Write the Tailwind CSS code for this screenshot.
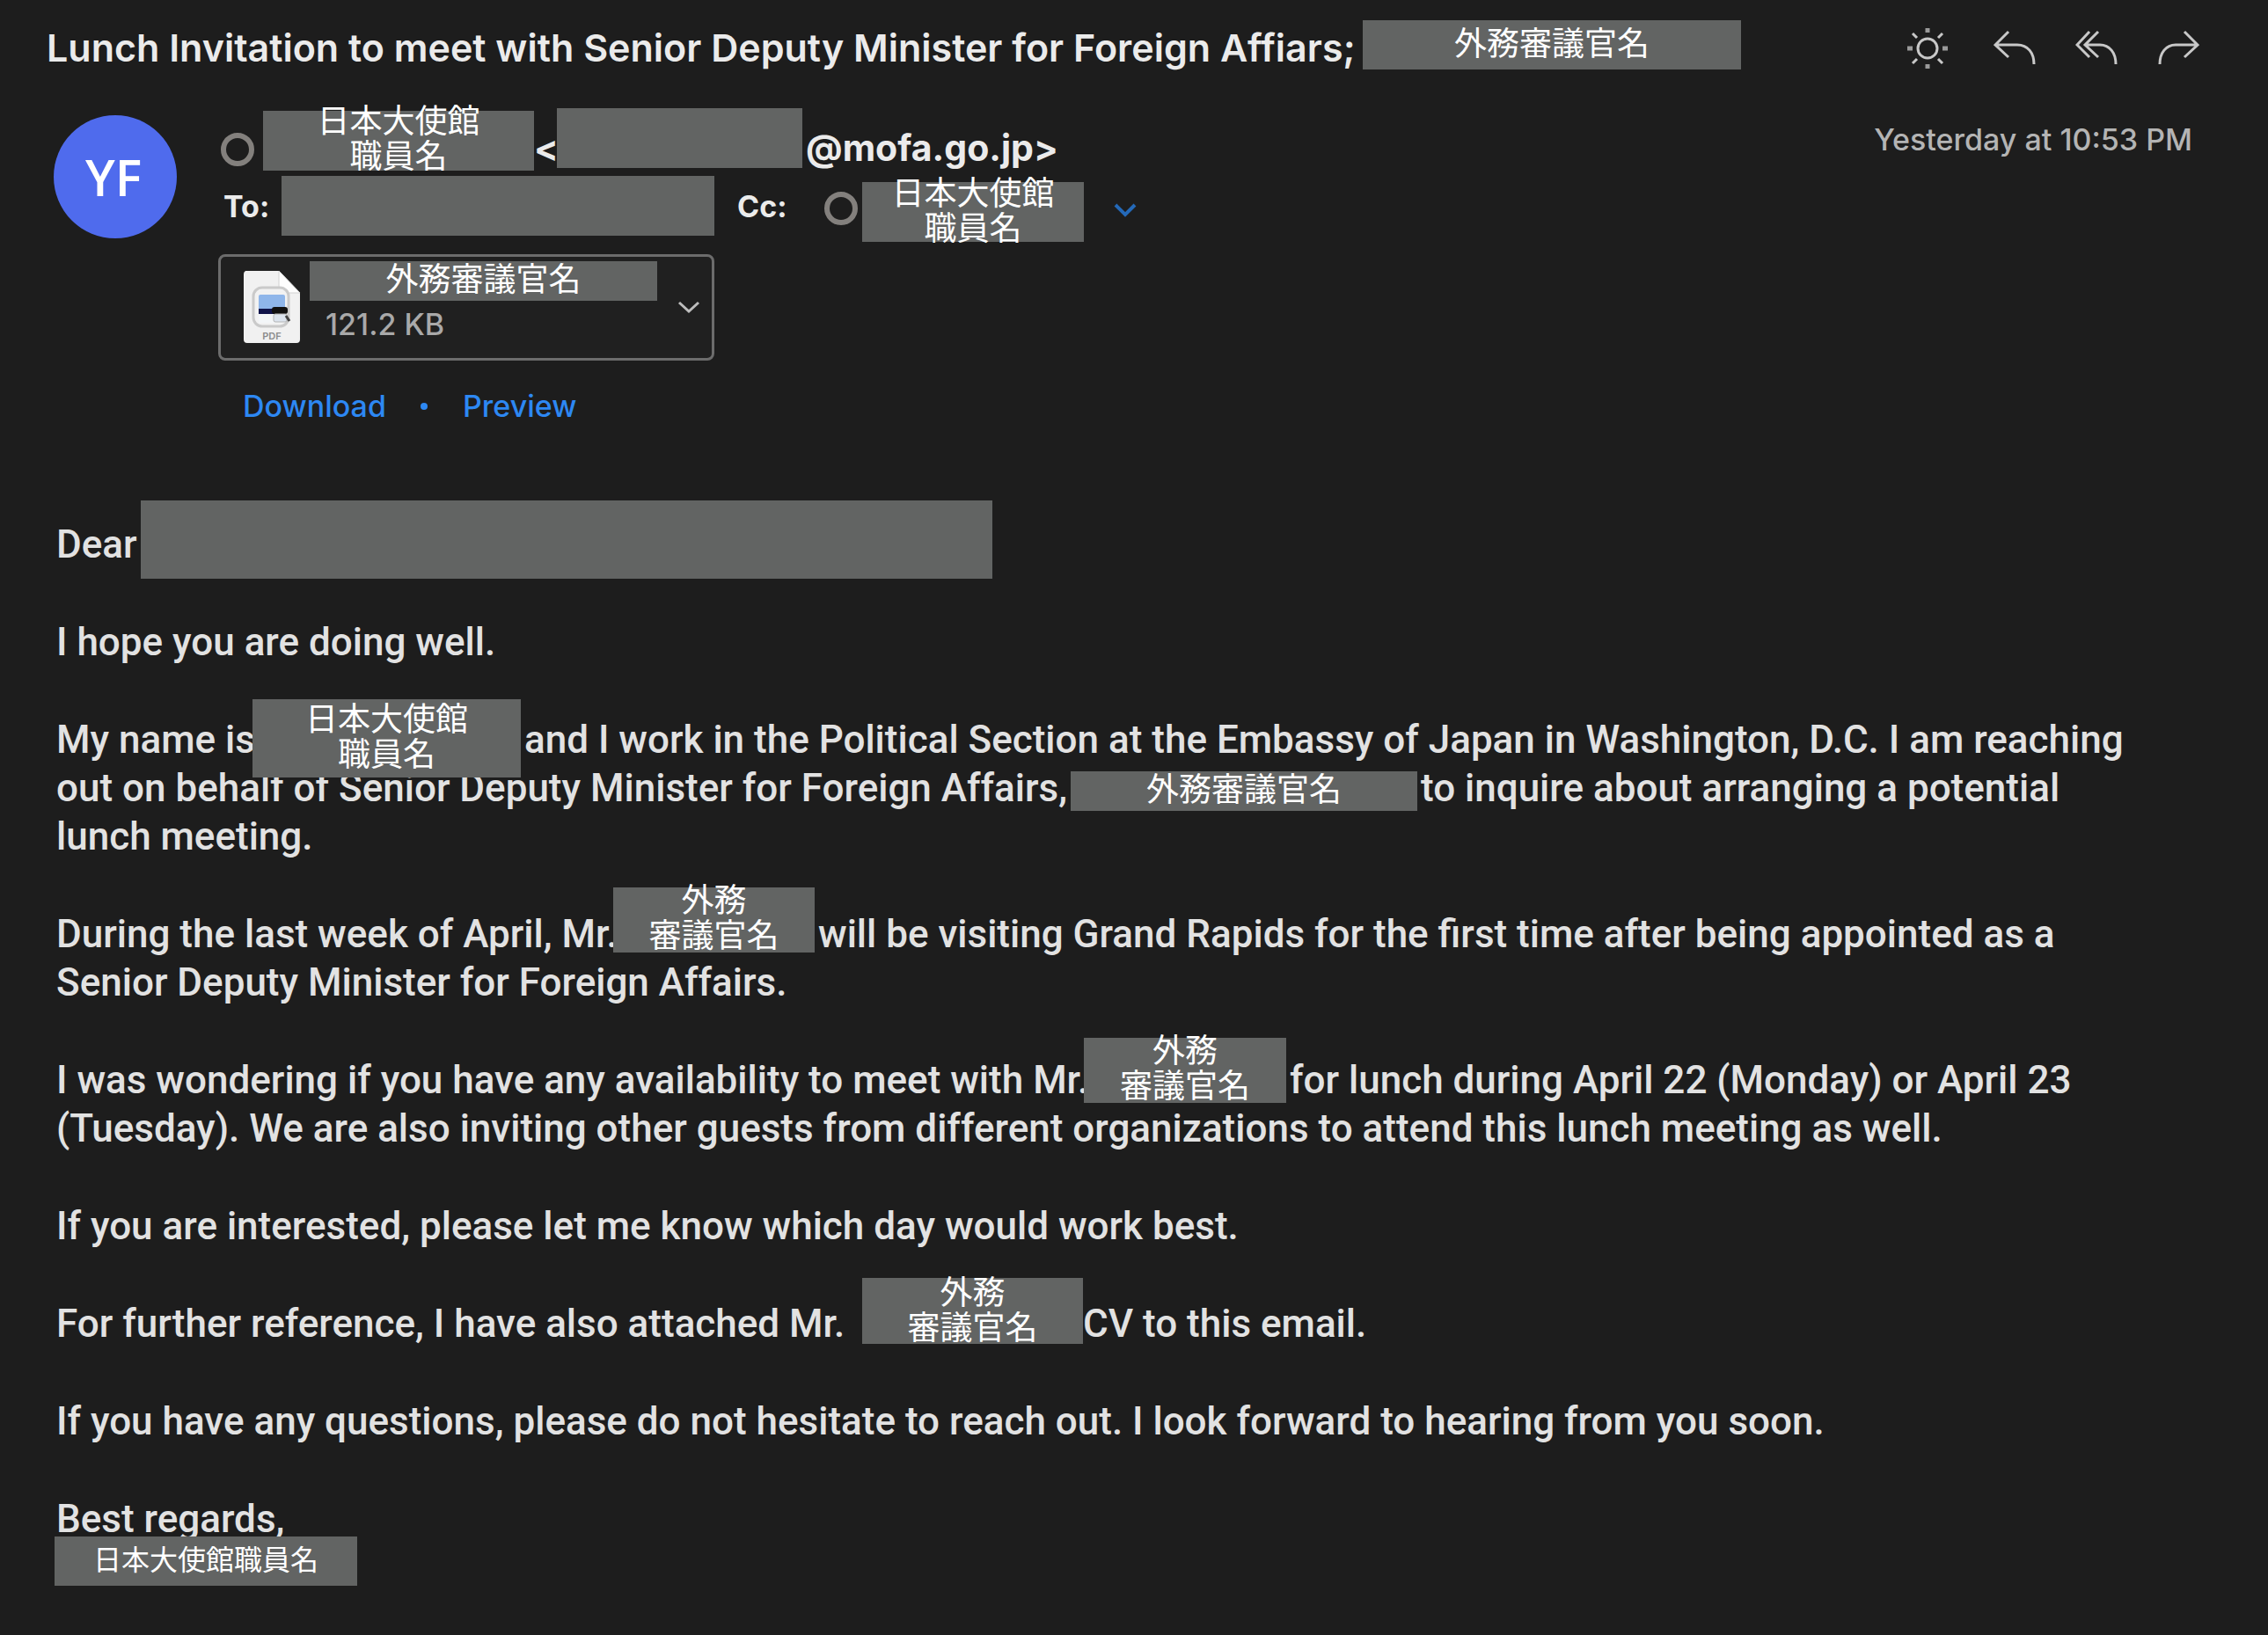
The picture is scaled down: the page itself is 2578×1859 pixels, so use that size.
<!DOCTYPE html>
<html lang="en">
<head>
<meta charset="utf-8">
<meta name="viewport" content="width=device-width, initial-scale=1">
<title>Lunch Invitation</title>
<script src="https://cdn.jsdelivr.net/npm/@tailwindcss/browser@4"></script>
</head>
<body class="min-h-screen bg-[#1d1d1d] font-['Inter','Noto_Sans_CJK_JP',sans-serif] text-[#ebebeb]">
<main class="pt-[23px] pb-14">

  <!-- Subject and message actions -->
  <header class="flex h-[62px] items-center pr-[78px] pl-[53px]">
    <h1 class="w-[1496px] shrink-0 text-[43px] leading-[62px] font-semibold whitespace-nowrap">Lunch Invitation to meet with Senior Deputy Minister for Foreign Affiars;</h1>
    <span class="flex h-14 w-[430px] shrink-0 items-center justify-center self-start bg-[#626463] pb-2 font-['Noto_Sans_CJK_JP',sans-serif] text-[37px] leading-10 text-white" lang="ja">外務審議官名</span>
    <div class="ml-auto flex items-center gap-[45px] text-[#c8c8c8]">
      <button type="button" aria-label="Switch background" class="mr-1.5 size-12">
        <svg viewBox="0 0 48 48" class="size-12" fill="none" stroke="currentColor" stroke-width="3"><circle cx="24" cy="25" r="11"/><path d="M7 8l5 5M41 8l-5 5M7 42l5-5M41 42l-5-5"/><path stroke="#9a9a9a" stroke-width="5" d="M24 2v5M24 43v5M1 25h6M41 25h6"/></svg>
      </button>
      <button type="button" aria-label="Reply" class="size-12">
        <svg viewBox="0 0 48 48" class="size-12" fill="none" stroke="currentColor" stroke-width="3"><path d="M17 6L2 21l15 14M2 21h25c12 0 19 9 19 22"/></svg>
      </button>
      <button type="button" aria-label="Reply all" class="size-12">
        <svg viewBox="0 0 48 48" class="size-12" fill="none" stroke="currentColor" stroke-width="3"><path d="M16 6L2 21l14 14M26 6L11 21l15 14M11 21h17c11 0 18 9 18 22"/></svg>
      </button>
      <button type="button" aria-label="Forward" class="size-12">
        <svg viewBox="0 0 48 48" class="size-12" fill="none" stroke="currentColor" stroke-width="3"><path d="M31 6l15 15-15 14M46 21H21C10 21 3 30 3 43"/></svg>
      </button>
    </div>
  </header>

  <!-- Sender, recipients and attachment -->
  <section class="mt-[38px] flex items-start pr-[86px] pl-[61px]">
    <div class="mt-2 flex size-[140px] shrink-0 items-center justify-center rounded-full bg-[#4f6bed] pt-0.5 pr-1 font-['Open_Sans',sans-serif] text-[57px] font-semibold text-white">YF</div>

    <div class="ml-[47px]">
      <div class="flex h-[71px] items-start pl-[3px] text-[41px] leading-[50px] font-bold">
        <span class="mt-7 size-[38px] shrink-0 rounded-full border-[6px] border-[#83807d]"></span>
        <span class="mt-[3px] ml-2.5 flex h-[68px] w-[308px] shrink-0 items-center justify-center bg-[#626463] pb-2.5 text-center font-['Noto_Sans_CJK_JP',sans-serif] text-[37px] leading-10 font-normal text-white" lang="ja">日本大使館<br>職員名</span>
        <span class="mt-5 w-[26px] shrink-0">&lt;</span>
        <span class="relative h-[68px] w-[279px] shrink-0 bg-[#626463]"></span>
        <span class="mt-5 ml-1">@mofa.go.jp&gt;</span>
      </div>

      <div class="mt-1.5 flex h-[75px] items-start pl-1.5 text-[34px] leading-10 font-bold">
        <span class="mt-[15px] w-[66px] shrink-0">To:</span>
        <span class="h-[68px] w-[492px] shrink-0 bg-[#626463]"></span>
        <span class="mt-[15px] ml-[26px] w-[99px] shrink-0">Cc:</span>
        <span class="mt-[18px] size-[38px] shrink-0 rounded-full border-[6px] border-[#83807d]"></span>
        <span class="mt-[7px] ml-[5px] flex h-[68px] w-[252px] shrink-0 items-center justify-center bg-[#626463] pb-2 text-center font-['Noto_Sans_CJK_JP',sans-serif] text-[37px] leading-10 font-normal text-white" lang="ja">日本大使館<br>職員名</span>
        <button type="button" aria-label="Show all recipients" class="mt-7 ml-8 text-[#2469b8]">
          <svg viewBox="0 0 30 24" class="h-6 w-[30px]" fill="none" stroke="currentColor" stroke-width="4"><path d="M4 5l11 11L26 5"/></svg>
        </button>
      </div>

      <div class="mt-3.5 flex h-[121px] w-[564px] items-start rounded-lg border-[3px] border-[#6c6c6c] bg-[#202020] pl-[25px]">
        <svg viewBox="0 0 66 84" class="mt-[15px] h-[84px] w-[66px] shrink-0" aria-hidden="true">
          <path d="M3 1h38l24 25v53a4 4 0 0 1-4 4H5a4 4 0 0 1-4-4V5a4 4 0 0 1 2-4z" fill="#f1f1f1"/>
          <path d="M41 1l24 25H45a4 4 0 0 1-4-4z" fill="#fdfdfd" stroke="#d2d2d2"/>
          <rect x="12" y="20" width="40" height="44" rx="10" fill="#f2f2f2" stroke="#cacaca" stroke-width="3"/>
          <rect x="18" y="28" width="30" height="18" rx="2" fill="#8fb6ea"/>
          <rect x="18" y="44" width="30" height="6" fill="#10144a"/>
          <rect x="18" y="50" width="30" height="10" fill="#f3f6f8"/>
          <rect x="33" y="42" width="18" height="8" rx="3" fill="#111"/>
          <rect x="35" y="50" width="15" height="9" rx="2" fill="#dce4ee" stroke="#b4b4b4"/>
          <path d="M49 52l4 6" stroke="#444" stroke-width="3"/>
          <text x="33" y="79" text-anchor="middle" font-family="Inter, sans-serif" font-size="11" font-weight="600" fill="#8c8c8c">PDF</text>
        </svg>
        <div class="ml-[10px] flex w-[395px] shrink-0 flex-col">
          <span class="mt-[5px] flex h-[45px] items-center justify-center bg-[#626463] pb-2.5 font-['Noto_Sans_CJK_JP',sans-serif] text-[37px] leading-10 text-white" lang="ja">外務審議官名</span>
          <span class="mt-[7px] pl-[18px] text-[34px] leading-10 font-medium text-[#a9a9a9]">121.2 KB</span>
        </div>
        <button type="button" aria-label="Attachment options" class="mt-[45px] ml-[21px] text-[#bdbdbd]">
          <svg viewBox="0 0 30 24" class="h-6 w-[30px]" fill="none" stroke="currentColor" stroke-width="3"><path d="M4 7l11 10L26 7"/></svg>
        </button>
      </div>

      <div class="mt-8 flex items-center pl-7 text-[34px] leading-10 font-medium text-[#2d88f3]">
        <a href="#download" class="w-[164px]">Download</a>
        <span class="mr-10 ml-[38px] size-2 rounded-full bg-[#2d88f3]"></span>
        <a href="#preview">Preview</a>
      </div>
    </div>

    <time class="mt-4 ml-auto text-[34px] leading-10 font-medium whitespace-nowrap text-[#b4b4b4]">Yesterday at 10:53 PM</time>
  </section>

  <!-- Message text -->
  <article class="mt-[110px] flex flex-col gap-14 pr-10 pl-16 font-['Roboto',sans-serif] text-[44px] leading-[55px] font-medium whitespace-nowrap text-[#e2e2e2]">
    <div class="flex h-[55px] items-start">
      <span class="w-24 shrink-0">Dear</span>
      <span class="relative -mt-[23px] h-[89px] w-[968px] shrink-0 bg-[#626463]"></span>
    </div>

    <p>I hope you are doing well.</p>

    <div>
      <div class="flex h-[55px] items-start">
        <span class="w-[223px] shrink-0">My name is</span>
        <span class="relative z-10 -mt-[19px] flex h-[89px] w-[305px] shrink-0 items-center justify-center bg-[#626463] pb-2.5 text-center font-['Noto_Sans_CJK_JP',sans-serif] text-[37px] leading-10 font-normal text-white" lang="ja">日本大使館<br>職員名</span>
        <span class="ml-1">and I work in the Political Section at the Embassy of Japan in Washington, D.C. I am reaching</span>
      </div>
      <div class="flex h-[55px] items-start">
        <span class="w-[1153px] shrink-0">out on behalf of Senior Deputy Minister for Foreign Affairs,</span>
        <span class="relative mt-2 flex h-[45px] w-[394px] shrink-0 items-center justify-center bg-[#626463] pb-2.5 font-['Noto_Sans_CJK_JP',sans-serif] text-[37px] leading-10 font-normal text-white" lang="ja">外務審議官名</span>
        <span class="ml-1">to inquire about arranging a potential</span>
      </div>
      <p>lunch meeting.</p>
    </div>

    <div>
      <div class="flex h-[55px] items-start">
        <span class="w-[633px] shrink-0">During the last week of April, Mr.</span>
        <span class="relative -mt-[26px] flex h-[74px] w-[229px] shrink-0 items-center justify-center bg-[#626463] pb-2.5 text-center font-['Noto_Sans_CJK_JP',sans-serif] text-[37px] leading-10 font-normal text-white" lang="ja">外務<br>審議官名</span>
        <span class="ml-1">will be visiting Grand Rapids for the first time after being appointed as a</span>
      </div>
      <p>Senior Deputy Minister for Foreign Affairs.</p>
    </div>

    <div>
      <div class="flex h-[55px] items-start">
        <span class="w-[1168px] shrink-0">I was wondering if you have any availability to meet with Mr.</span>
        <span class="relative -mt-[21px] flex h-[74px] w-[230px] shrink-0 items-center justify-center bg-[#626463] pb-2.5 text-center font-['Noto_Sans_CJK_JP',sans-serif] text-[37px] leading-10 font-normal text-white" lang="ja">外務<br>審議官名</span>
        <span class="ml-1">for lunch during April 22 (Monday) or April 23</span>
      </div>
      <p>(Tuesday). We are also inviting other guests from different organizations to attend this lunch meeting as well.</p>
    </div>

    <p>If you are interested, please let me know which day would work best.</p>

    <div class="flex h-[55px] items-start">
      <span class="w-[916px] shrink-0">For further reference, I have also attached Mr.</span>
      <span class="relative -mt-[25px] flex h-[75px] w-[251px] shrink-0 items-center justify-center bg-[#626463] pb-2 text-center font-['Noto_Sans_CJK_JP',sans-serif] text-[37px] leading-10 font-normal text-white" lang="ja">外務<br>審議官名</span>
      <span>CV to this email.</span>
    </div>

    <p>If you have any questions, please do not hesitate to reach out. I look forward to hearing from you soon.</p>

    <div>
      <p>Best regards,</p>
      <span class="relative -mt-2 -ml-0.5 flex h-14 w-[344px] items-center justify-center bg-[#626463] pb-2 font-['Noto_Sans_CJK_JP',sans-serif] text-[32px] leading-10 font-normal text-white" lang="ja">日本大使館職員名</span>
    </div>
  </article>
</main>
</body>
</html>
